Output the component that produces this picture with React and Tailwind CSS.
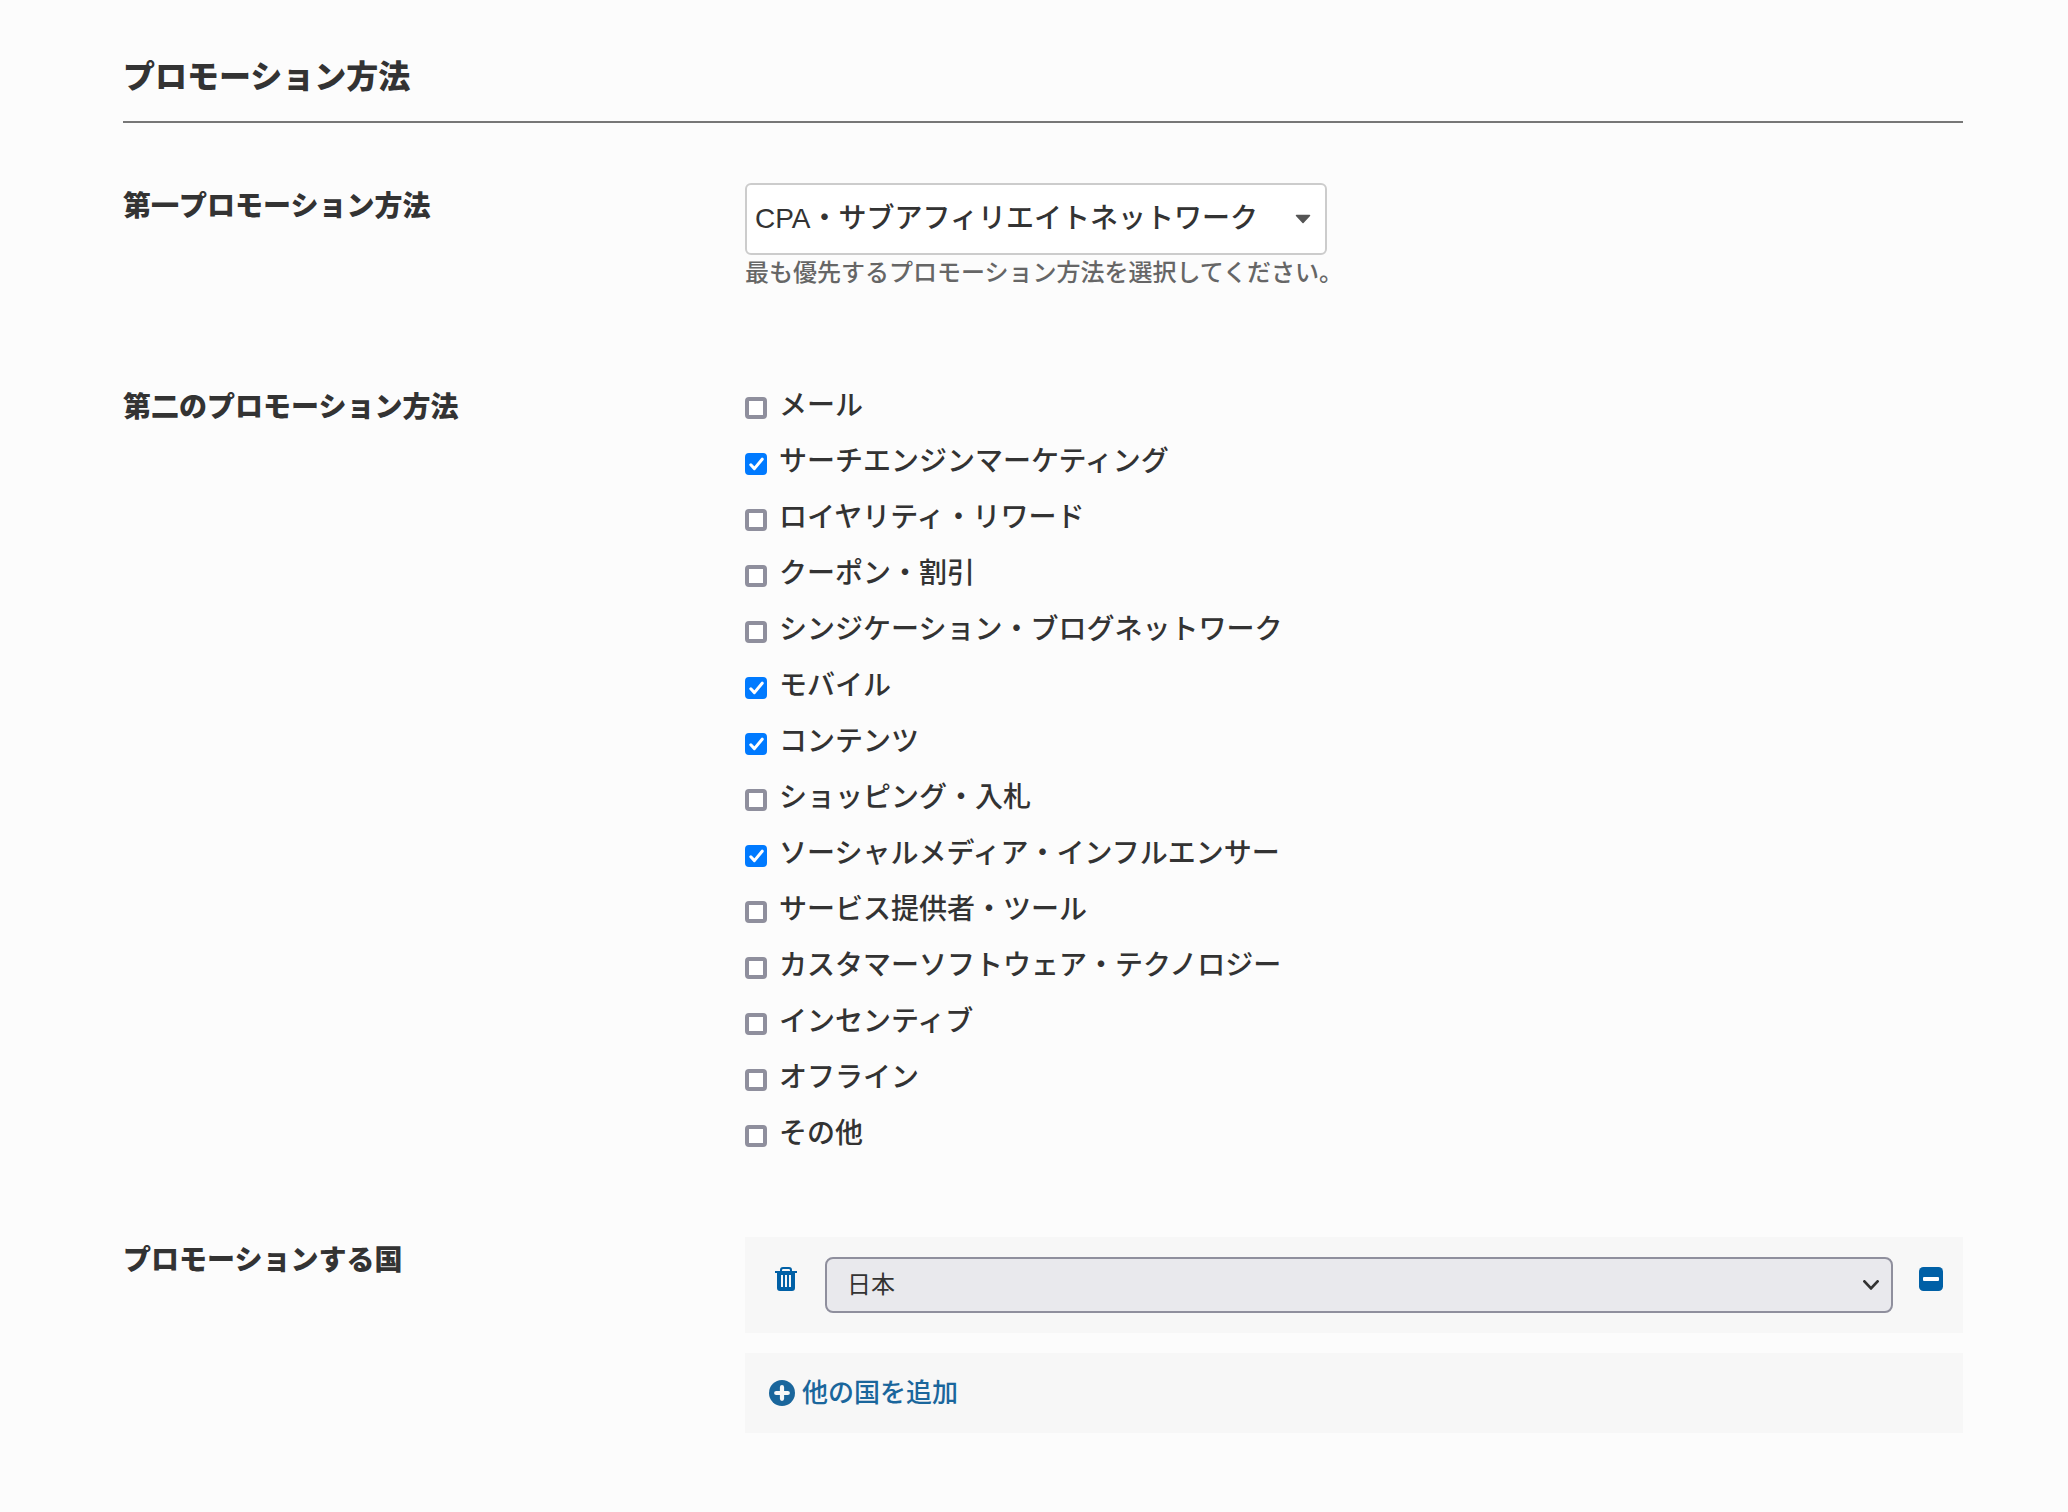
import { useState } from 'react';

const METHODS = [
  ['メール', false],
  ['サーチエンジンマーケティング', true],
  ['ロイヤリティ・リワード', false],
  ['クーポン・割引', false],
  ['シンジケーション・ブログネットワーク', false],
  ['モバイル', true],
  ['コンテンツ', true],
  ['ショッピング・入札', false],
  ['ソーシャルメディア・インフルエンサー', true],
  ['サービス提供者・ツール', false],
  ['カスタマーソフトウェア・テクノロジー', false],
  ['インセンティブ', false],
  ['オフライン', false],
  ['その他', false],
];

function Checkbox({ label, defaultChecked }) {
  return (
    <label className="flex h-14 items-start gap-3 text-[28px] leading-10 font-medium">
      <span className="mt-[11px] grid size-[22px] shrink-0">
        <input
          type="checkbox"
          defaultChecked={defaultChecked}
          className="peer col-start-1 row-start-1 size-[22px] appearance-none rounded-[4px] border-4 border-[#8f8f9d] bg-white checked:border-[#007aff] checked:bg-[#007aff]"
        />
        <svg
          viewBox="0 0 22 22"
          className="pointer-events-none invisible col-start-1 row-start-1 size-[22px] peer-checked:visible"
          fill="none"
          stroke="#fff"
          strokeWidth="3"
          strokeLinecap="round"
          strokeLinejoin="round"
          aria-hidden="true"
        >
          <path d="M5.800 11.800l3.600 3.800L17.200 6.200" />
        </svg>
      </span>
      {label}
    </label>
  );
}

function Row({ title, htmlFor, className, children }) {
  const titleStyle = 'pt-1 text-[28px] leading-10 font-black';
  return (
    <div className={`grid grid-cols-[622fr_1218fr] ${className}`}>
      {htmlFor ? (
        <label htmlFor={htmlFor} className={titleStyle}>{title}</label>
      ) : (
        <h3 className={titleStyle}>{title}</h3>
      )}
      <div>{children}</div>
    </div>
  );
}

function TrashIcon() {
  return (
    <svg viewBox="0 0 22 24" className="h-6 w-[22px]" aria-hidden="true">
      <path fill="#0060a6" d="M0 4h5V3a3 3 0 0 1 3-3h6a3 3 0 0 1 3 3v1h5v2h-2v15a3 3 0 0 1-3 3H5a3 3 0 0 1-3-3V6H0z" />
      <path fill="#f7f7f7" d="M7 4V3.200a1.200 1.200 0 0 1 1.200-1.200h5.600A1.200 1.200 0 0 1 15 3.200V4z" />
      <path fill="#f7f7f7" d="M6 8h2v12H6zM10 8h2v12h-2zM14 8h2v12h-2z" />
    </svg>
  );
}

export default function App() {
  const [method, setMethod] = useState('cpa');
  return (
    <main className="min-h-screen bg-[#fcfcfc] pt-[53px] pr-[105px] pb-[78px] pl-[123px] font-['Liberation_Sans','Noto_Sans_CJK_JP',sans-serif] text-[#333]">
      <h2 className="border-b-2 border-[#777] pb-5 text-[32px] leading-12 font-black">プロモーション方法</h2>

      <Row title="第一プロモーション方法" htmlFor="primary" className="mt-[60px]">
        <div className="grid w-[582px]">
          <select
            id="primary"
            value={method}
            onChange={(e) => setMethod(e.target.value)}
            className="col-start-1 row-start-1 h-[72px] w-full appearance-none rounded-[6px] border-2 border-[#ccc] bg-white px-2 text-[28px] font-medium"
          >
            <option value="cpa">CPA・サブアフィリエイトネットワーク</option>
          </select>
          <svg viewBox="0 0 16 10" className="pointer-events-none col-start-1 row-start-1 mr-4 h-[10px] w-4 self-center justify-self-end" aria-hidden="true">
            <path fill="#555" stroke="#555" strokeWidth="1.500" strokeLinejoin="round" d="M1.500 1.500h13L8 8.500z" />
          </svg>
        </div>
        <p className="text-[24px] leading-9 font-medium text-[#666]">最も優先するプロモーション方法を選択してください。</p>
      </Row>

      <Row title="第二のプロモーション方法" className="mt-[93px]">
        <div className="pt-0.5">
          {METHODS.map(([label, checked]) => (
            <Checkbox key={label} label={label} defaultChecked={checked} />
          ))}
        </div>
      </Row>

      <Row title="プロモーションする国" htmlFor="country" className="mt-[67px]">
        <div className="flex h-24 items-start bg-[#f7f7f7] py-5 pr-5 pl-[30px]">
          <button type="button" aria-label="削除" className="mt-[10px] mr-7">
            <TrashIcon />
          </button>
          <div className="grid flex-1">
            <select
              id="country"
              className="col-start-1 row-start-1 h-14 w-full appearance-none rounded-[8px] border-2 border-[#8f8f9d] bg-[#e9e9ed] px-5 text-[24px]"
            >
              <option>日本</option>
            </select>
            <svg viewBox="0 0 16 10" className="pointer-events-none col-start-1 row-start-1 mr-[14px] h-[10px] w-4 self-center justify-self-end" fill="none" stroke="#333" strokeWidth="2.800" strokeLinecap="round" strokeLinejoin="round" aria-hidden="true">
              <path d="M1.400 1.400L8 8.400l6.600-7" />
            </svg>
          </div>
          <button type="button" aria-label="折りたたむ" className="mt-[10px] ml-[26px]">
            <svg viewBox="0 0 24 24" className="size-6" aria-hidden="true">
              <rect width="24" height="24" rx="4.500" fill="#0060a6" />
              <rect x="4" y="10" width="16" height="4" rx="1" fill="#fff" />
            </svg>
          </button>
        </div>
        <div className="mt-5 flex h-20 items-center bg-[#f7f7f7] px-6">
          <a href="#add" className="flex items-center gap-[7px] text-[26px] leading-10 font-medium text-[#1a669c]">
            <svg viewBox="0 0 26 26" className="size-[26px]" aria-hidden="true">
              <circle cx="13" cy="13" r="13" fill="#1a669c" />
              <path d="M13 7.200v11.600M7.200 13h11.600" stroke="#f7f7f7" strokeWidth="4.200" strokeLinecap="round" />
            </svg>
            他の国を追加
          </a>
        </div>
      </Row>
    </main>
  );
}
